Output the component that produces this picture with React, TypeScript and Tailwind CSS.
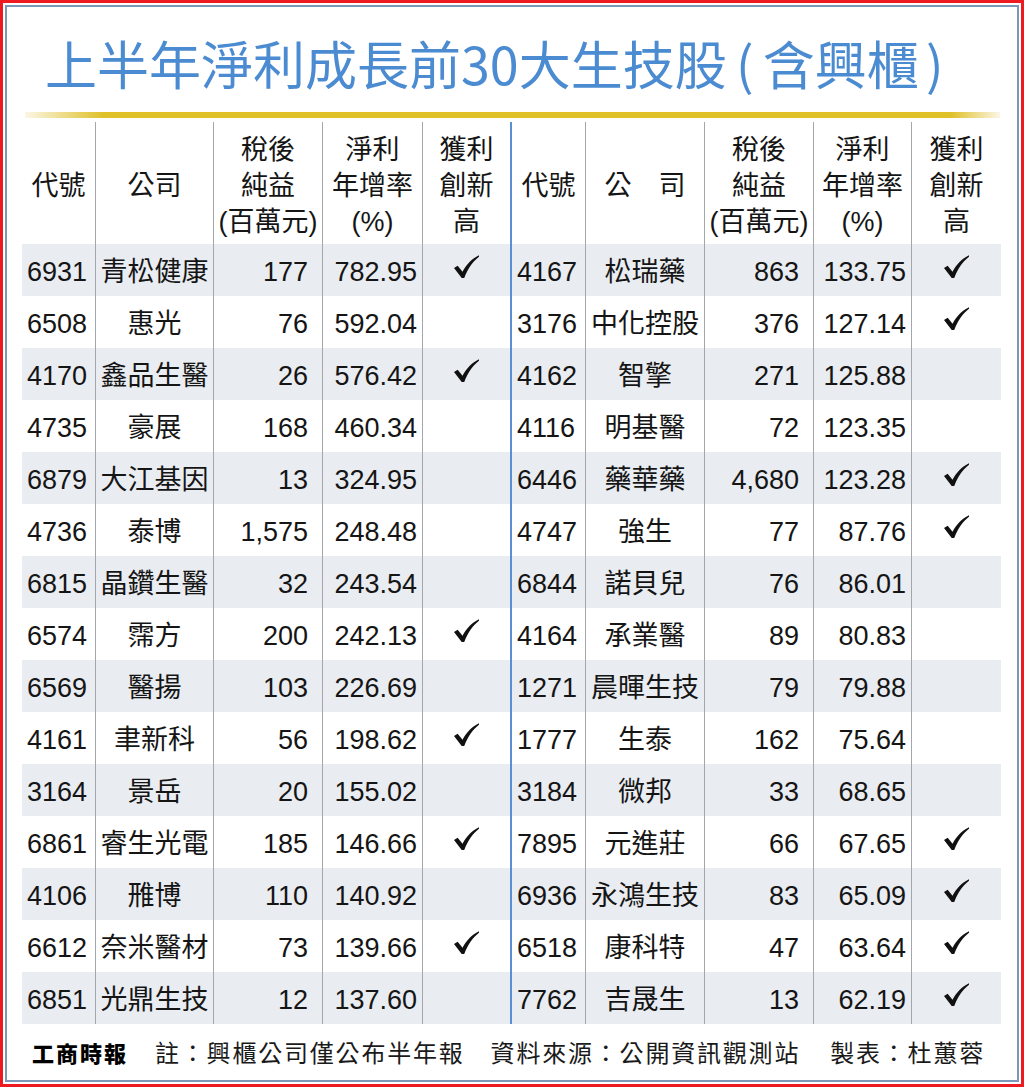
import React from "react";

type R = [string, string, string, string, boolean];

const left: R[] = [
  ["6931", "青松健康", "177", "782.95", true],
  ["6508", "惠光", "76", "592.04", false],
  ["4170", "鑫品生醫", "26", "576.42", true],
  ["4735", "豪展", "168", "460.34", false],
  ["6879", "大江基因", "13", "324.95", false],
  ["4736", "泰博", "1,575", "248.48", false],
  ["6815", "晶鑽生醫", "32", "243.54", false],
  ["6574", "霈方", "200", "242.13", true],
  ["6569", "醫揚", "103", "226.69", false],
  ["4161", "聿新科", "56", "198.62", true],
  ["3164", "景岳", "20", "155.02", false],
  ["6861", "睿生光電", "185", "146.66", true],
  ["4106", "雃博", "110", "140.92", false],
  ["6612", "奈米醫材", "73", "139.66", true],
  ["6851", "光鼎生技", "12", "137.60", false],
];

const right: R[] = [
  ["4167", "松瑞藥", "863", "133.75", true],
  ["3176", "中化控股", "376", "127.14", true],
  ["4162", "智擎", "271", "125.88", false],
  ["4116", "明基醫", "72", "123.35", false],
  ["6446", "藥華藥", "4,680", "123.28", true],
  ["4747", "強生", "77", "87.76", true],
  ["6844", "諾貝兒", "76", "86.01", false],
  ["4164", "承業醫", "89", "80.83", false],
  ["1271", "晨暉生技", "79", "79.88", false],
  ["1777", "生泰", "162", "75.64", false],
  ["3184", "微邦", "33", "68.65", false],
  ["7895", "元進莊", "66", "67.65", true],
  ["6936", "永鴻生技", "83", "65.09", true],
  ["6518", "康科特", "47", "63.64", true],
  ["7762", "吉晟生", "13", "62.19", true],
];

const Check = () => (
  <svg width="25" height="23" viewBox="0 0 24 22" className="mb-[8px]">
    <path
      d="M0 12.5 L3.5 10.2 L8.2 16 C12 9 17 3.8 24 0.3 L24 1.6 C18 6.2 13.5 12.5 9.8 22 L7.4 22 Z"
      fill="#111"
    />
  </svg>
);

const line = "border-r border-[#a3a7ab]";

function Half({ r }: { r: R }) {
  return (
    <>
      <div className={`${line} flex items-center pl-[5px] pt-[4px]`}>{r[0]}</div>
      <div className={`${line} flex items-center justify-center whitespace-nowrap pt-[4px]`}>{r[1]}</div>
      <div className={`${line} flex items-center justify-end pr-[14px] pt-[4px]`}>{r[2]}</div>
      <div className={`${line} flex items-center justify-end pr-[5px] pt-[4px]`}>{r[3]}</div>
      <div className="flex items-center justify-center">{r[4] ? <Check /> : null}</div>
    </>
  );
}

function HeadHalf({ company }: { company: string }) {
  return (
    <>
      <div className={`${line} flex items-center justify-center pt-[6px]`}>代號</div>
      <div className={`${line} flex items-center justify-center whitespace-pre pt-[6px]`}>{company}</div>
      <div className={`${line} flex flex-col items-center justify-center pt-[5px]`}>
        <span>稅後</span>
        <span>純益</span>
        <span>(百萬元)</span>
      </div>
      <div className={`${line} flex flex-col items-center justify-center pt-[5px]`}>
        <span>淨利</span>
        <span>年增率</span>
        <span>(%)</span>
      </div>
      <div className="flex flex-col items-center justify-center pt-[5px]">
        <span>獲利</span>
        <span>創新</span>
        <span>高</span>
      </div>
    </>
  );
}

const cols =
  "grid grid-cols-[74px_118px_109px_100px_87px_2px_74px_119px_109px_98px_89px]";

export default function App() {
  return (
    <div className="w-[1024px] h-[1087px] bg-white border-[3px] border-[#ee1a22] p-[2px]">
      <div className="h-full border-2 border-[#7d97b8] flex flex-col font-['Liberation_Sans','Noto_Sans_CJK_TC',sans-serif] text-[#151515]">
        <div className="mt-[30px] pl-[38px] h-[52px] leading-[52px] text-[52px] text-[#4b8bd1] font-['Noto_Sans_CJK_TC',sans-serif] whitespace-nowrap">
          上半年淨利成長前30大生技股
          <span className="inline-block w-[36px] text-center">(</span>
          含興櫃
          <span className="inline-block w-[32px] text-center">)</span>
        </div>
        <div className="mt-[23px] ml-[18px] w-[975px] h-[6px] bg-[linear-gradient(to_right,#fbf6e6,#e0c12a_8%,#e0c12a_95%,#fbf6e6)]" />
        <div className="mt-[4px] ml-[15px] w-[979px] text-[27px]">
          <div className={`${cols} h-[122px] leading-[36px]`}>
            <HeadHalf company="公司" />
            <div className="bg-[#5a8fd3]" />
            <HeadHalf company={"公\u3000司"} />
          </div>
          {left.map((l, i) => (
            <div
              key={i}
              className={`${cols} h-[52px] leading-none ${i % 2 === 0 ? "bg-[#e9ecf1]" : "bg-white"}`}
            >
              <Half r={l} />
              <div className="bg-[#5a8fd3]" />
              <Half r={right[i]} />
            </div>
          ))}
        </div>
        <div className="flex-1 flex items-center pl-[25px] font-['Noto_Sans_CJK_TC',sans-serif] text-[24px] text-[#1a1a1a] whitespace-nowrap">
          <span className="w-[96px] text-[22px] font-black tracking-[2px] text-black">工商時報</span>
          <span className="ml-[27px] tracking-[1.8px]">註：興櫃公司僅公布半年報</span>
          <span className="ml-[26px] tracking-[1.8px]">資料來源：公開資訊觀測站</span>
          <span className="ml-[30px] tracking-[1.8px]">製表：杜蕙蓉</span>
        </div>
      </div>
    </div>
  );
}
